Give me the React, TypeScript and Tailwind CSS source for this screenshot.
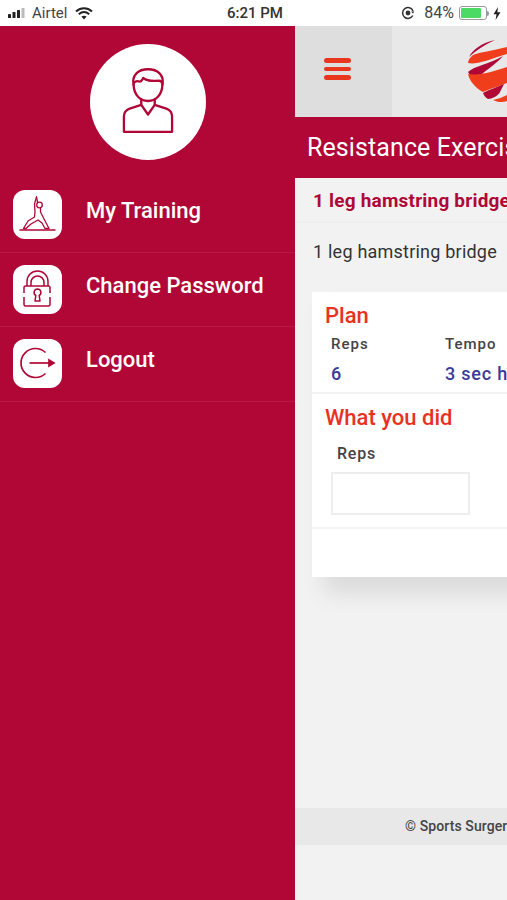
import type { ReactNode } from 'react'

const crimson = '#b00737'

function StatusBar() {
  return (
    <div className="h-[26px] bg-white flex items-center text-[#444] text-[15px] relative font-['Roboto',sans-serif]">
      <svg width="20" height="10" viewBox="0 0 20 10" className="ml-[8px]">
        <rect x="0" y="6" width="3" height="4" rx="0.6" fill="#222" />
        <rect x="4.5" y="4" width="3" height="6" rx="0.6" fill="#222" />
        <rect x="9" y="2" width="3" height="8" rx="0.6" fill="#222" />
        <rect x="13.5" y="0" width="3" height="10" rx="0.6" fill="#bbb" />
      </svg>
      <span className="ml-[4px]">Airtel</span>
      <svg width="18" height="13" viewBox="0 0 18 13" className="ml-[8px]">
        <path d="M1 4.5C5.8 0.3 12.2 0.3 17 4.5" fill="none" stroke="#222" strokeWidth="2" />
        <path d="M3.8 7.2C7 4.6 11 4.6 14.2 7.2" fill="none" stroke="#222" strokeWidth="2" />
        <path d="M6.4 9.6C8 8.4 10 8.4 11.6 9.6L9 12.6Z" fill="#222" />
      </svg>
      <span className="absolute left-[227px] font-medium text-[15px] text-[#333]">6:21 PM</span>
      <div className="ml-auto flex items-center">
        <svg width="14" height="14" viewBox="0 0 14 14">
          <path d="M11.8 9.5A5.4 5.4 0 1 1 12 5" fill="none" stroke="#333" strokeWidth="1.5" />
          <circle cx="7" cy="7" r="2.4" fill="#333" />
          <path d="M10 5.5h3.4L12 7.5Z" fill="#333" />
        </svg>
        <span className="ml-[9px] text-[16px]">84%</span>
        <div className="ml-[5px] w-[28px] h-[14px] rounded-[3px] border border-[#999] p-[1px]">
          <div className="h-full w-[84%] bg-[#4cd964] rounded-[1px]" />
        </div>
        <div className="w-[2px] h-[5px] bg-[#999] rounded-r-sm" />
        <svg width="8" height="13" viewBox="0 0 8 13" className="ml-[4px] mr-[6px]">
          <path d="M5 0L0.5 7.2H3.5L2.6 13L7.5 5.2H4.4Z" fill="#222" />
        </svg>
      </div>
    </div>
  )
}

function IconBox({ children }: { children: ReactNode }) {
  return <div className="w-[49px] h-[49px] rounded-[12px] bg-white shrink-0">{children}</div>
}

const YogaIcon = (
  <svg width="49" height="49" viewBox="0 0 49 49" fill="none" stroke={crimson} strokeWidth="1.3" strokeLinejoin="round" strokeLinecap="round">
    <path d="M23.5 7L21.5 14L22 22L21.5 27L15 31L10.5 38.5H13L18 34L25 30L29 33L32 38.5H36L30 27L27.5 22L27.5 18.5" />
    <path d="M23.5 7L24.5 12" />
    <circle cx="26.5" cy="15" r="2.8" />
    <path d="M7 40H42" strokeWidth="1.5" />
  </svg>
)

const LockIcon = (
  <svg width="49" height="49" viewBox="0 0 49 49" fill="none" stroke={crimson} strokeWidth="1.5" strokeLinejoin="round">
    <path d="M14 21V16.5a10.5 10.5 0 0 1 21 0V21" />
    <path d="M18 21V17.5a6.5 6.5 0 0 1 13 0V21" />
    <path d="M11 28V22.5a1.5 1.5 0 0 1 1.5-1.5H35.5a1.5 1.5 0 0 1 1.5 1.5V28M11 32V39.5a1.5 1.5 0 0 0 1.5 1.5H35.5a1.5 1.5 0 0 0 1.5-1.5V32" />
    <path d="M24.5 24a3.5 3.5 0 0 1 1.7 6.5l.8 5.500h-5l.8-5.500a3.500 3.500 0 0 1 1.700-6.500Z" />
  </svg>
)

const LogoutIcon = (
  <svg width="49" height="49" viewBox="0 0 49 49" fill="none" stroke={crimson} strokeWidth="1.7">
    <path d="M32.5 13.5A14.5 14.5 0 1 0 32.5 34.5" />
    <path d="M16.5 24H37" />
    <path d="M36 21L41 24L36 27Z" fill={crimson} />
  </svg>
)

const menu = [
  { label: 'My Training', icon: YogaIcon },
  { label: 'Change Password', icon: LockIcon },
  { label: 'Logout', icon: LogoutIcon },
]

function Sidebar() {
  return (
    <div className="w-[295px] shrink-0 bg-[#b00737] pt-[18px]">
      <div className="w-[116px] h-[116px] rounded-full bg-white ml-[90px] flex items-center justify-center">
        <svg width="52" height="68" viewBox="0 0 54 70" fill="none" stroke={crimson} strokeWidth="2.4" strokeLinejoin="round" strokeLinecap="round" className="mb-[3px]">
          <path d="M12 18C10 8 17 2 27 2C37 2 44 8 42 18" />
          <path d="M12 18C12.5 29 19 35 27 35C35 35 41.5 29 42 18C42 15 41 14 38 14C31 14 27 15 22 11C21 14 19 15.5 17 14.5C15 14 12 15 12 18Z" />
          <path d="M20 33V39L27 49L34 39V33" />
          <path d="M20 39L8 43C4 44.5 2 47 2 51V67H52V51C52 47 50 44.5 46 43L34 39" />
        </svg>
      </div>
      <div className="mt-[18px]">
        {menu.map((m) => (
          <div key={m.label} className="h-[74.5px] pl-[13px] pt-[12px] flex items-start border-b border-[#b91a45]">
            <IconBox>{m.icon}</IconBox>
            <span className="ml-[24px] mt-[4px] text-white text-[22px] font-medium font-['Roboto',sans-serif]">
              {m.label}
            </span>
          </div>
        ))}
      </div>
    </div>
  )
}

function Main() {
  return (
    <div className="w-[600px] shrink-0 bg-[#f2f2f2] flex flex-col font-['Roboto',sans-serif]">
      <div className="h-[91px] bg-[#e8e8e8] flex shrink-0">
        <div className="w-[97px] bg-[#dedede] flex flex-col pl-[29px] pt-[32px] gap-[4px]">
          <div className="w-[27px] h-[4.5px] rounded-sm bg-[#e8361f]" />
          <div className="w-[27px] h-[4.5px] rounded-sm bg-[#e8361f]" />
          <div className="w-[27px] h-[4.5px] rounded-sm bg-[#e8361f]" />
        </div>
        <svg width="67" height="80" viewBox="0 0 67 80" className="ml-[48px] mt-[4px]">
          <path d="M55 10C42 13 33 19 29 27C34 22 44 15 55 10Z" fill={crimson} />
          <path d="M67 17C52 21 40 22 33 25C30 28 28 30 28 33C36 35 48 30 67 24Z" fill="#f03d1c" />
          <path d="M28 42C34 36 50 34 63 26C56 34 46 40 41 45L34 47C31 46 29 44 28 42Z" fill={crimson} />
          <path d="M28 44C40 46 55 41 67 37V53C60 56 52 58 43 62C36 58 30 52 28 44Z" fill="#f03d1c" />
          <path d="M43 63C50 59 58 57 64 54L60 62C58 66 52 69 48 69C46 68 44 66 43 63Z" fill={crimson} />
          <path d="M53 70C58 69 63 67 67 65V71C62 73 57 72 53 70Z" fill="#f03d1c" />
        </svg>
      </div>

      <div className="h-[61px] bg-[#b00737] flex items-center pl-[12px] text-white text-[25px] tracking-[0.1px] shrink-0">
        Resistance Exercises
      </div>

      <div className="h-[45px] pl-[18px] pt-[3px] flex items-center border-b-2 border-[#eeeeee] text-[#b00737] text-[19px] font-bold tracking-[0.2px] shrink-0">
        1 leg hamstring bridge
      </div>
      <div className="pl-[18px] mt-[16px] text-[18px] leading-[26px] tracking-[0.22px] text-[#333]">1 leg hamstring bridge</div>

      <div className="ml-[17px] mr-[20px] mt-[27px] h-[285px] bg-white shadow-[12px_16px_22px_rgba(0,0,0,0.1)]">
        <div className="h-[102px] border-b-2 border-[#f3f3f3] pt-[10px]">
          <div className="pl-[13px] text-[22px] leading-[28px] font-medium text-[#e8321f]">Plan</div>
          <div className="flex pl-[19px] mt-[4px] text-[15px] leading-[20px] font-medium tracking-[1px] text-[#444]">
            <span className="w-[114px]">Reps</span>
            <span>Tempo</span>
          </div>
          <div className="flex pl-[19px] mt-[8px] text-[18px] leading-[24px] font-medium tracking-[0.8px] text-[#3b3a98]">
            <span className="w-[114px]">6</span>
            <span>3 sec hold</span>
          </div>
        </div>
        <div className="h-[135px] border-b-2 border-[#f3f3f3] pt-[10px]">
          <div className="pl-[13px] text-[22px] leading-[28px] font-medium text-[#e8321f]">What you did</div>
          <div className="pl-[25px] mt-[12px] text-[16px] leading-[20px] font-medium tracking-[0.8px] text-[#444]">Reps</div>
          <input className="block ml-[19px] mt-[8px] w-[139px] h-[43px] border-2 border-[#eeeeee] bg-white" />
        </div>
      </div>

      <div className="mt-[231px] h-[36.5px] bg-[#e8e8e8] pl-[110px] flex items-center text-[14px] font-medium tracking-[0.1px] text-[#444]">
        © Sports Surgery Clinic
      </div>
    </div>
  )
}

export default function App() {
  return (
    <div className="w-[507px] h-[900px] overflow-hidden flex flex-col bg-white">
      <StatusBar />
      <div className="flex flex-1 min-h-0">
        <Sidebar />
        <Main />
      </div>
    </div>
  )
}
